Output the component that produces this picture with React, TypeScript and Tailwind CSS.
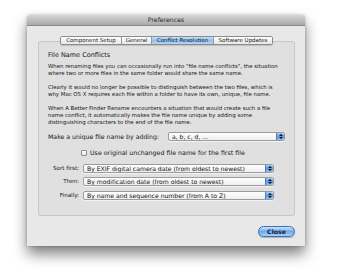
const font = { fontFamily: '"DejaVu Sans", "Liberation Sans", Arial, sans-serif' };

function Stepper() {
  return (
    <span className="flex h-full w-[8px] flex-col items-center justify-center gap-[1px] rounded-r-[2px] border-l border-[#4a7fc0] bg-gradient-to-b from-[#a9cdf5] via-[#5d9be3] to-[#8fbff2]">
      <svg width="4" height="2" viewBox="0 0 4 2">
        <path d="M0 2 L2 0 L4 2 Z" fill="#111" />
      </svg>
      <svg width="4" height="2" viewBox="0 0 4 2">
        <path d="M0 0 L4 0 L2 2 Z" fill="#111" />
      </svg>
    </span>
  );
}

function Popup({ label, width }: { label: string; width: string }) {
  return (
    <div
      className={`flex h-[9px] ${width} items-center overflow-hidden rounded-[2px] border border-[#9c9c9c] bg-gradient-to-b from-white to-[#eeeeee] shadow-[0_1px_0_rgba(255,255,255,0.6)]`}
    >
      <span className="flex-1 truncate whitespace-nowrap pl-[3px] text-[6.1px] leading-[7px] text-[#111]">
        {label}
      </span>
      <Stepper />
    </div>
  );
}

const tabs = [
  { name: "Component Setup", w: "w-[60px]" },
  { name: "General", w: "w-[30px]" },
  { name: "Conflict Resolution", w: "w-[62px]", active: true },
  { name: "Software Updates", w: "w-[59px]" },
];

export default function App() {
  return (
    <div className="min-h-[277px] bg-white pl-[27px] pt-[15px]" style={font}>
      <div className="w-[278px] overflow-hidden rounded-t-[3px] bg-[#e8e8e8] shadow-[0_8px_14px_rgba(0,0,0,0.5),0_0_3px_rgba(0,0,0,0.25)]">
        {/* title bar */}
        <div className="flex h-[11px] items-center justify-center border-b border-[#8a8a8a] bg-gradient-to-b from-[#d6d6d6] to-[#a9a9a9] text-[6.2px] text-[#2a2a2a]">
          Preferences
        </div>

        <div className="pb-[9px] pl-[11px] pr-[10px] pt-[10px]">
          {/* tabs */}
          <div className="relative z-10 flex h-[9px] justify-center">
            <div className="flex overflow-hidden rounded-[2px] border border-[#8c8c8c] shadow-[0_1px_1px_rgba(0,0,0,0.15)]">
              {tabs.map((t, i) => (
                <div
                  key={t.name}
                  className={`flex ${t.w} items-center justify-center whitespace-nowrap text-[5.5px] leading-[7px] ${
                    i > 0 ? "border-l border-[#9a9a9a]" : ""
                  } ${
                    t.active
                      ? "bg-gradient-to-b from-[#c6def8] via-[#95c1f0] to-[#b5d4f6] text-[#0b1a33]"
                      : "bg-gradient-to-b from-white to-[#e6e6e6] text-[#1a1a1a]"
                  }`}
                >
                  {t.name}
                </div>
              ))}
            </div>
          </div>

          {/* box */}
          <div className="-mt-[4px] rounded-[3px] border border-[#c6c6c6] bg-[#e0e0e0] pb-[15px] pl-[9px] pr-[6px] pt-[10px] text-[#161616]">
            <div className="text-[6.5px] leading-[7px]">File Name Conflicts</div>
            <p className="mt-[4px] whitespace-nowrap text-[5.4px] leading-[7px]">
              When renaming files you can occasionally run into "file name conflicts", the situation
              <br />
              where two or more files in the same folder would share the same name.
            </p>
            <p className="mt-[7px] whitespace-nowrap text-[5.4px] leading-[7px]">
              Clearly it would no longer be possible to distinguish between the two files, which is
              <br />
              why Mac OS X requires each file within a folder to have its own, unique, file name.
            </p>
            <p className="mt-[7px] whitespace-nowrap text-[5.4px] leading-[7px]">
              When A Better Finder Rename encounters a situation that would create such a file
              <br />
              name conflict, it automatically makes the file name unique by adding some
              <br />
              distinguishing characters to the end of the file name.
            </p>

            <div className="mt-[6px] flex items-center">
              <span className="w-[120px] whitespace-nowrap text-[6.2px] leading-[7px]">
                Make a unique file name by adding:
              </span>
              <Popup label="a, b, c, d, ..." width="w-[117px]" />
            </div>

            <div className="mt-[8px] flex items-center pl-[33px]">
              <span className="mr-[3px] h-[6px] w-[6px] rounded-[1px] border border-[#8e8e8e] bg-gradient-to-b from-white to-[#e4e4e4]" />
              <span className="whitespace-nowrap text-[6.3px] leading-[7px]">
                Use original unchanged file name for the first file
              </span>
            </div>

            <div className="mt-[8px] grid grid-cols-[30px_191px] items-center gap-x-[4px] gap-y-[4px] pl-[1px]">
              <span className="whitespace-nowrap text-right text-[5.6px] leading-[7px]">Sort first:</span>
              <Popup label="By EXIF digital camera date (from oldest to newest)" width="w-[191px]" />
              <span className="whitespace-nowrap text-right text-[5.6px] leading-[7px]">Then:</span>
              <Popup label="By modification date (from oldest to newest)" width="w-[191px]" />
              <span className="whitespace-nowrap text-right text-[5.6px] leading-[7px]">Finally:</span>
              <div className="mt-[1px]">
                <Popup label="By name and sequence number (from A to Z)" width="w-[191px]" />
              </div>
            </div>
          </div>

          {/* close */}
          <div className="mt-[10px] flex justify-end">
            <button className="flex h-[11px] w-[37px] items-center justify-center rounded-full border border-[#3c6fb3] bg-gradient-to-b from-[#cfe4fb] via-[#6ea9ea] to-[#a9d0f7] text-[6.2px] font-bold leading-[7px] text-[#10203a] shadow-[0_1px_1px_rgba(0,0,0,0.25)]">
              Close
            </button>
          </div>
        </div>
      </div>
    </div>
  );
}
